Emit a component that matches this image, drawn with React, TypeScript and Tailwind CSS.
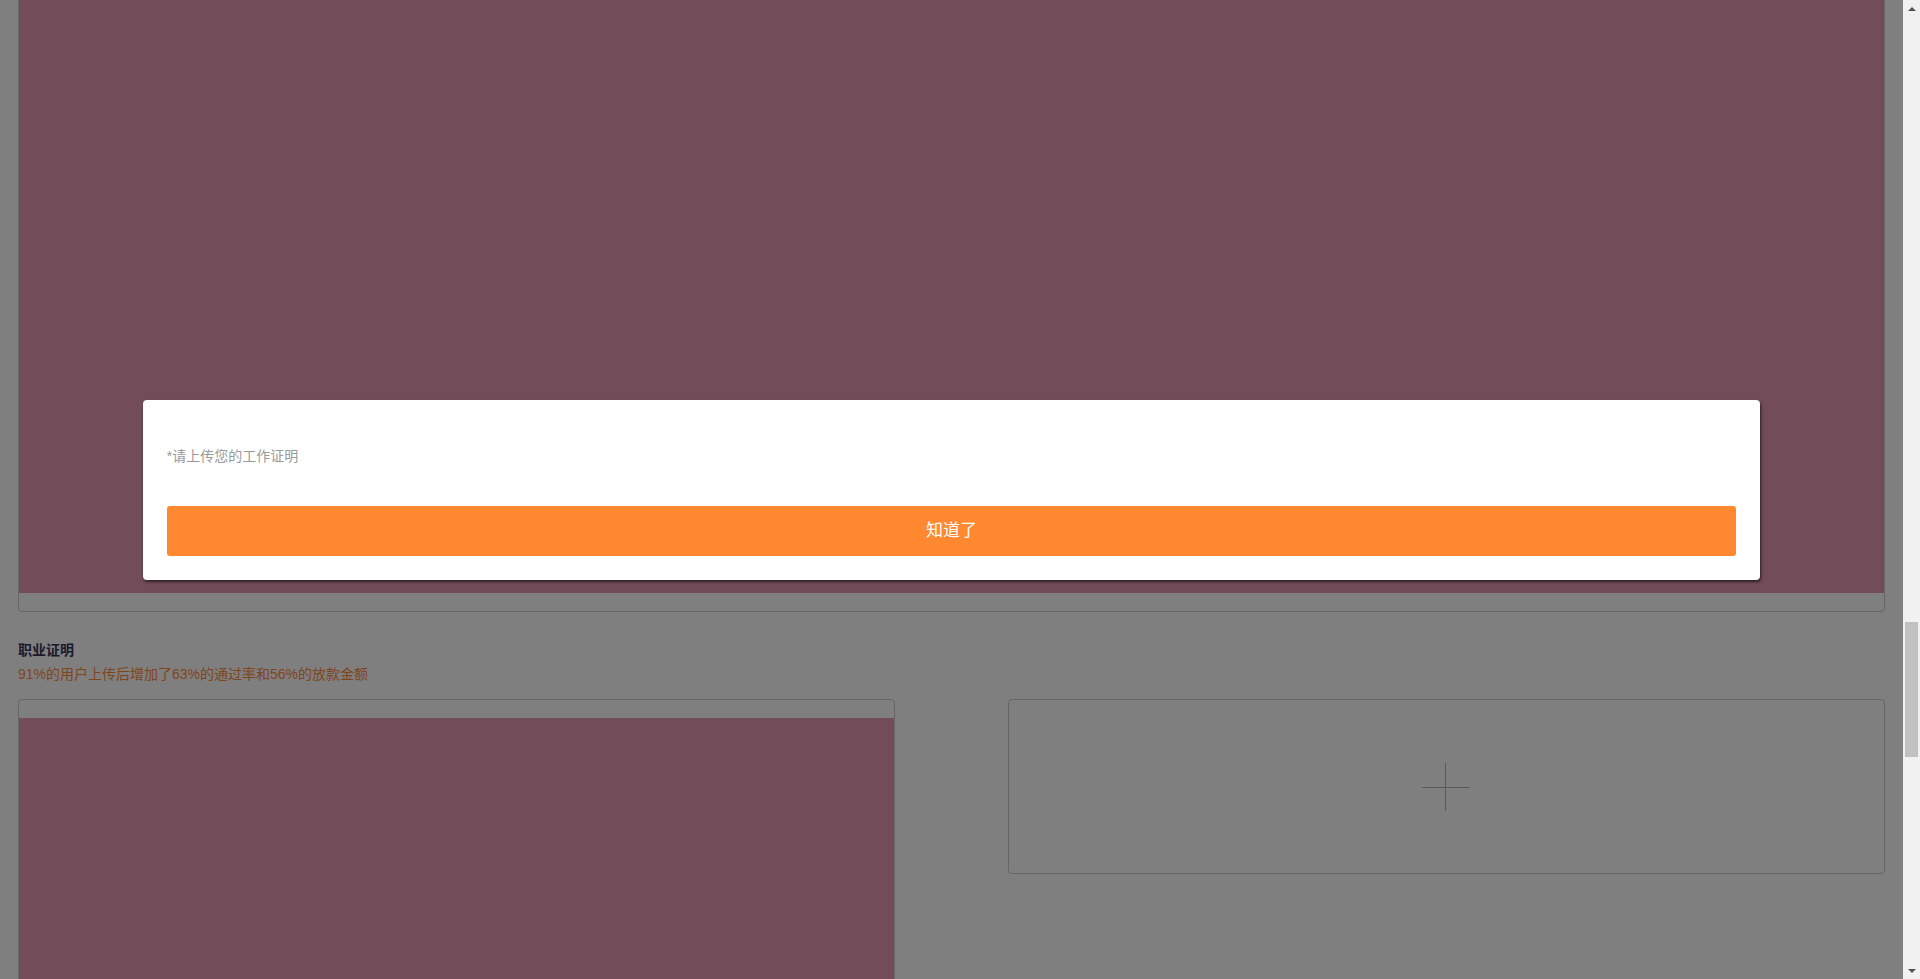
const font = 'font-["Liberation_Sans","Noto_Sans_CJK_SC",sans-serif]'

function Scrollbar() {
  return (
    <div className="w-[17px] h-full bg-[#f1f1f1] flex flex-col items-center shrink-0">
      <div className="h-[17px] w-full flex items-center justify-center">
        <div className="w-0 h-0 border-l-[4px] border-r-[4px] border-b-[4px] border-l-transparent border-r-transparent border-b-[#505050]" />
      </div>
      <div className="flex-1 w-full px-[2px] flex flex-col">
        <div className="h-[605px]" />
        <div className="h-[135px] w-full bg-[#c1c1c1]" />
      </div>
      <div className="h-[17px] w-full flex items-center justify-center">
        <div className="w-0 h-0 border-l-[4px] border-r-[4px] border-t-[4px] border-l-transparent border-r-transparent border-t-[#505050]" />
      </div>
    </div>
  )
}

function PlusMark() {
  return (
    <svg width="48" height="48" viewBox="0 0 48 48" shapeRendering="crispEdges">
      <line x1="0" y1="24.5" x2="48" y2="24.5" stroke="#b0b0b0" strokeWidth="1" />
      <line x1="23.5" y1="0" x2="23.5" y2="48" stroke="#b0b0b0" strokeWidth="1" />
    </svg>
  )
}

function Modal() {
  return (
    <div className="absolute inset-0 flex items-center justify-center">
      <div className="w-[85%] bg-white rounded-[4px] shadow-[1px_2px_3px_rgba(0,0,0,0.6)] px-6 pt-[46px] pb-6">
        <p className="text-[14px] leading-5 text-[#999]">*请上传您的工作证明</p>
        <button className="mt-10 w-full h-[50px] rounded-[3px] bg-[#ff8830] text-white text-[17px]">
          知道了
        </button>
      </div>
    </div>
  )
}

export default function App() {
  return (
    <div className={`h-[979px] w-full flex overflow-hidden ${font}`}>
      <div className="relative flex-1 h-full overflow-hidden bg-white">
        <div className="px-[18px]">
          <div className="-mt-[10px] border border-[#cccccc] rounded-[4px] pb-[18px] overflow-hidden">
            <div className="h-[602px] bg-[#e498b0]" />
          </div>

          <div className="mt-[26px] text-[14px] leading-6">
            <h3 className="font-bold text-[#38345a]">职业证明</h3>
            <p className="text-[#ff8a3c]">91%的用户上传后增加了63%的通过率和56%的放款金额</p>
          </div>

          <div className="mt-[13px] flex justify-between items-start">
            <div className="w-[47%] border border-[#cccccc] rounded-[4px] pt-[18px] overflow-hidden">
              <div className="h-[400px] bg-[#e498b0]" />
            </div>
            <div className="w-[47%] h-[175px] border border-[#cccccc] rounded-[4px] flex items-center justify-center">
              <PlusMark />
            </div>
          </div>
        </div>

        <div className="absolute inset-0 bg-[rgba(0,0,0,0.5)]" />
        <Modal />
      </div>
      <Scrollbar />
    </div>
  )
}
